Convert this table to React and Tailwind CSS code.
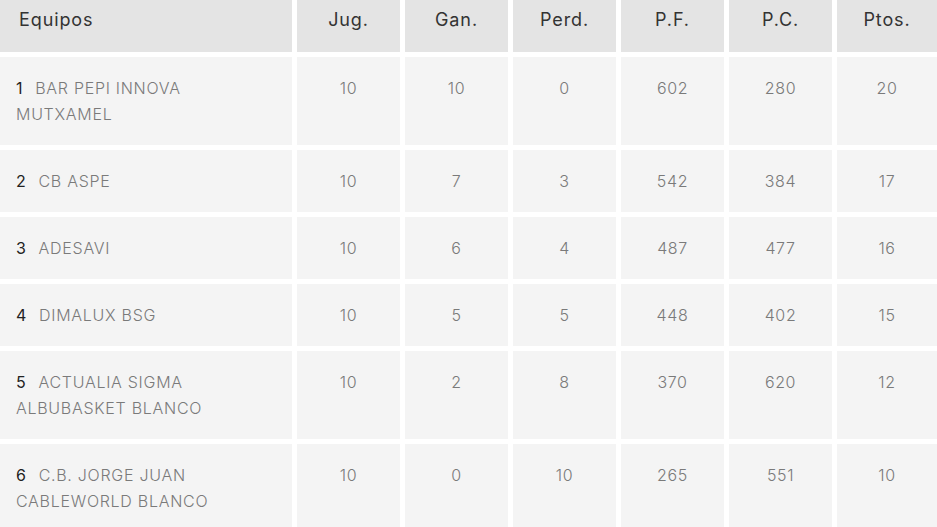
import React from "react";

const equipos = [
  { pos: 1, nombre: "BAR PEPI INNOVA MUTXAMEL", jug: 10, gan: 10, perd: 0, pf: 602, pc: 280, ptos: 20 },
  { pos: 2, nombre: "CB ASPE", jug: 10, gan: 7, perd: 3, pf: 542, pc: 384, ptos: 17 },
  { pos: 3, nombre: "ADESAVI", jug: 10, gan: 6, perd: 4, pf: 487, pc: 477, ptos: 16 },
  { pos: 4, nombre: "DIMALUX BSG", jug: 10, gan: 5, perd: 5, pf: 448, pc: 402, ptos: 15 },
  { pos: 5, nombre: "ACTUALIA SIGMA ALBUBASKET BLANCO", jug: 10, gan: 2, perd: 8, pf: 370, pc: 620, ptos: 12 },
  { pos: 6, nombre: "C.B. JORGE JUAN CABLEWORLD BLANCO", jug: 10, gan: 0, perd: 10, pf: 265, pc: 551, ptos: 10 },
];

const cabeceras = ["Jug.", "Gan.", "Perd.", "P.F.", "P.C.", "Ptos."];

export default function App() {
  return (
    <div className="w-full h-[527px] overflow-hidden bg-white" style={{ fontFamily: "Inter, 'Noto Sans', sans-serif" }}>
      <div className="grid grid-cols-[292px_103px_103px_103px_103px_103px_1fr] gap-[5px]">
        <div className="bg-[#e4e4e4] h-[52px] pl-[19px] pt-[7px] text-[18px] leading-[26px] tracking-[0.05em] text-[#333]">Equipos</div>
        {cabeceras.map((c) => (
          <div key={c} className="bg-[#e4e4e4] h-[52px] pt-[7px] text-center text-[18px] leading-[26px] tracking-[0.05em] text-[#333]">
            {c}
          </div>
        ))}

        {equipos.map((e) => (
          <React.Fragment key={e.pos}>
            <div className="bg-[#f4f4f4] pl-4 pr-10 py-[18px] text-[16px] leading-[26px] font-light tracking-[0.045em] text-[#7a7a7a]">
              <span className="inline-block text-[#222] font-normal mr-[12px]">{e.pos}</span>
              {e.nombre}
            </div>
            {[e.jug, e.gan, e.perd, e.pf, e.pc, e.ptos].map((v, i) => (
              <div key={i} className="bg-[#f4f4f4] py-[18px] text-center text-[16px] leading-[26px] font-light tracking-[0.04em] text-[#7a7a7a]">
                {v}
              </div>
            ))}
          </React.Fragment>
        ))}
      </div>
    </div>
  );
}
